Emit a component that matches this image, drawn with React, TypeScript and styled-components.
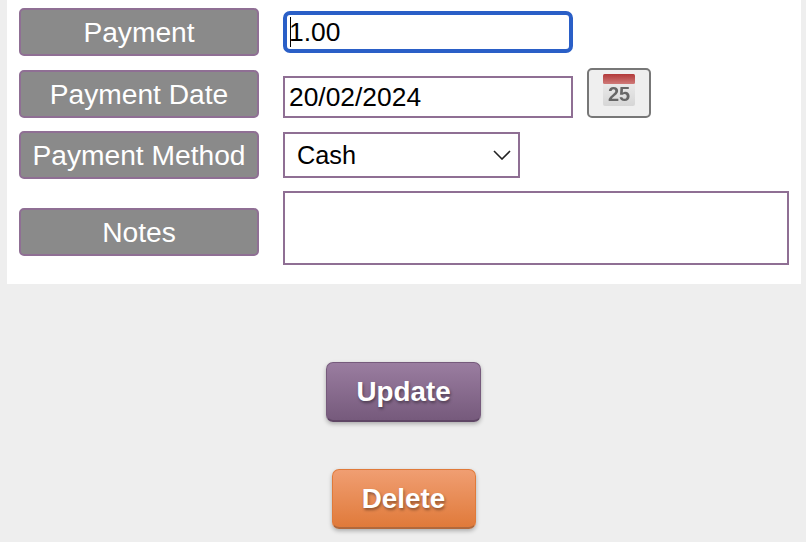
import styled, { createGlobalStyle } from 'styled-components';

const GlobalStyle = createGlobalStyle`
  html, body {
    margin: 0;
    padding: 0;
    background: #eeeeee;
    font-family: 'Liberation Sans', Arial, sans-serif;
  }
`;

const Page = styled.div`
  width: 806px;
  height: 542px;
  overflow: hidden;
  background: #eeeeee;
`;

const Panel = styled.form`
  margin: 0 5px 0 7px;
  height: 284px;
  box-sizing: border-box;
  padding: 0 12px;
  background: #ffffff;
  display: flex;
  flex-direction: column;
`;

const Row = styled.div<{ $top: number; $height: number; $align: string }>`
  display: flex;
  gap: 24px;
  margin-top: ${({ $top }) => $top}px;
  height: ${({ $height }) => $height}px;
  align-items: ${({ $align }) => $align};
`;

const Label = styled.label`
  flex: none;
  width: 240px;
  height: 48px;
  box-sizing: border-box;
  border: 2px solid #8f6f94;
  border-radius: 5px;
  background: #8a8a8a;
  color: #ffffff;
  font-size: 28.2px;
  line-height: 45px;
  text-align: center;
`;

const FieldWrap = styled.div`
  position: relative;
  width: 290px;
  height: 42px;
`;

const FocusedInput = styled.input`
  width: 100%;
  height: 100%;
  box-sizing: border-box;
  border: 4px solid #2a5fc7;
  border-radius: 7px;
  padding: 0 2px;
  outline: none;
  background: #ffffff;
  color: #000000;
  font-family: inherit;
  font-size: 26.4px;
`;

const Caret = styled.span`
  position: absolute;
  left: 7px;
  top: 6px;
  width: 1px;
  height: 30px;
  background: #000000;
`;

const DateInput = styled.input`
  width: 290px;
  height: 42px;
  box-sizing: border-box;
  border: 2px solid #8f6f94;
  border-radius: 0;
  padding: 0 4px;
  outline: none;
  background: #ffffff;
  color: #000000;
  font-family: inherit;
  font-size: 26.4px;
`;

const CalendarButton = styled.button`
  flex: none;
  width: 64px;
  height: 50px;
  margin-left: -10px;
  box-sizing: border-box;
  border: 2px solid #777777;
  border-radius: 5px;
  padding: 0;
  background: #efefef;
  display: flex;
  justify-content: center;
  align-items: flex-start;

  svg {
    margin-top: 3px;
  }
`;

const SelectWrap = styled.div`
  position: relative;
  width: 237px;
  height: 46px;

  svg {
    position: absolute;
    right: 9px;
    top: 18px;
  }
`;

const MethodSelect = styled.select`
  width: 100%;
  height: 100%;
  box-sizing: border-box;
  appearance: none;
  border: 2px solid #8f6f94;
  border-radius: 0;
  padding: 0 12px;
  outline: none;
  background: #ffffff;
  color: #000000;
  font-family: inherit;
  font-size: 25.3px;
`;

const NotesArea = styled.textarea`
  display: block;
  align-self: flex-start;
  width: 506px;
  height: 74px;
  box-sizing: border-box;
  border: 2px solid #8f6f94;
  border-radius: 0;
  padding: 4px;
  outline: none;
  resize: none;
  background: #ffffff;
  font-family: inherit;
  font-size: 26px;
`;

const Actions = styled.div`
  display: flex;
  flex-direction: column;
  align-items: center;
  gap: 47px;
  padding-top: 78px;
  padding-left: 1px;
`;

const ActionButton = styled.button<{ $width: number; $top: string; $bottom: string; $edge: string }>`
  width: ${({ $width }) => $width}px;
  height: 60px;
  box-sizing: border-box;
  padding: 0;
  border: 1px solid ${({ $bottom }) => $bottom};
  border-bottom: 2px solid ${({ $edge }) => $edge};
  border-radius: 7px;
  background: linear-gradient(${({ $top }) => $top}, ${({ $bottom }) => $bottom});
  box-shadow: 0 2px 4px rgba(0, 0, 0, 0.28);
  color: #ffffff;
  font-family: inherit;
  font-size: 27.8px;
  font-weight: 700;
  text-shadow: 1px 2px 3px rgba(0, 0, 0, 0.4);
`;

const CalendarIcon = () => (
  <svg width="34" height="34" viewBox="0 0 34 34">
    <defs>
      <linearGradient id="calBody" x1="0" y1="0" x2="0" y2="1">
        <stop offset="0" stopColor="#f2f2f2" />
        <stop offset="1" stopColor="#d6d6d6" />
      </linearGradient>
      <linearGradient id="calTop" x1="0" y1="0" x2="0" y2="1">
        <stop offset="0" stopColor="#b23a3a" />
        <stop offset="1" stopColor="#cf7a78" />
      </linearGradient>
      <filter id="calSoft">
        <feGaussianBlur stdDeviation="0.6" />
      </filter>
    </defs>
    <g filter="url(#calSoft)">
      <rect x="1" y="1" width="32" height="32" rx="2" fill="url(#calBody)" />
      <rect x="1" y="1" width="32" height="10" rx="1.5" fill="url(#calTop)" />
      <text x="17" y="28" textAnchor="middle" fontFamily="'Liberation Sans', sans-serif" fontSize="20" fontWeight="700" fill="#666666">
        25
      </text>
    </g>
  </svg>
);

const Chevron = () => (
  <svg width="18" height="10" viewBox="0 0 18 10" fill="none">
    <path d="M1 1l8 8 8-8" stroke="#222222" strokeWidth="1.6" />
  </svg>
);

const App = () => (
  <Page>
    <GlobalStyle />
    <Panel>
      <Row $top={8} $height={48} $align="center">
        <Label>Payment</Label>
        <FieldWrap>
          <FocusedInput defaultValue="1.00" readOnly />
          <Caret />
        </FieldWrap>
      </Row>
      <Row $top={12} $height={50} $align="flex-end">
        <Label>Payment Date</Label>
        <DateInput defaultValue="20/02/2024" readOnly />
        <CalendarButton type="button">
          <CalendarIcon />
        </CalendarButton>
      </Row>
      <Row $top={13} $height={48} $align="center">
        <Label>Payment Method</Label>
        <SelectWrap>
          <MethodSelect defaultValue="Cash">
            <option>Cash</option>
          </MethodSelect>
          <Chevron />
        </SelectWrap>
      </Row>
      <Row $top={12} $height={82} $align="center">
        <Label>Notes</Label>
        <NotesArea />
      </Row>
    </Panel>
    <Actions>
      <ActionButton type="button" $width={155} $top="#9a7da0" $bottom="#765a7c" $edge="#5f4665">
        Update
      </ActionButton>
      <ActionButton type="button" $width={144} $top="#f09e72" $bottom="#e07a3a" $edge="#b0683c">
        Delete
      </ActionButton>
    </Actions>
  </Page>
);

export default App;
